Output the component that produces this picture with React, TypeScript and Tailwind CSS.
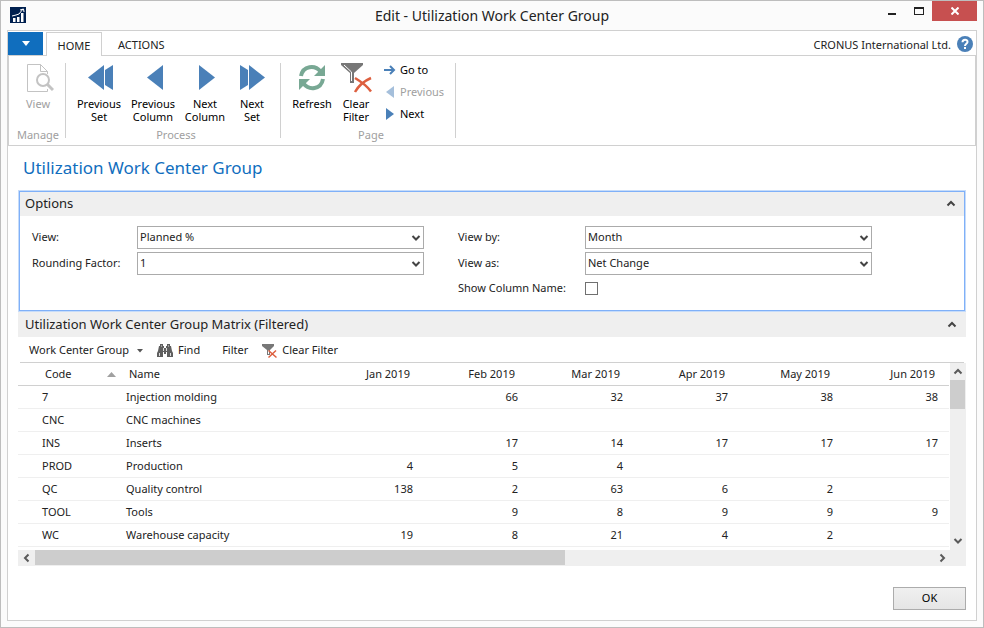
import React from "react";

const BLUE = "#4a80b8";

function Chevron({ dir, color = "#444444" }: { dir: "up" | "down" | "left" | "right"; color?: string }) {
  const paths = {
    up: "M1.5 6.5 L5 3 L8.5 6.5",
    down: "M1.5 3 L5 6.5 L8.5 3",
    left: "M6.5 1.5 L3 5 L6.5 8.5",
    right: "M3.5 1.5 L7 5 L3.5 8.5",
  };
  return (
    <svg width="10" height="10" viewBox="0 0 10 10" fill="none" aria-hidden="true">
      <path d={paths[dir]} stroke={color} strokeWidth="2" />
    </svg>
  );
}

function Arrows({ points, color = BLUE }: { points: string[]; color?: string }) {
  return (
    <svg width="32" height="32" viewBox="0 1 32 32" fill={color} aria-hidden="true">
      {points.map((p) => (
        <polygon key={p} points={p} />
      ))}
    </svg>
  );
}

function ViewIcon() {
  return (
    <svg width="32" height="32" viewBox="0 1 32 32" fill="none" stroke="#c3c3c3" aria-hidden="true">
      <path d="M18.5 2.5H5.5V29.5H25.5V27" />
      <path d="M18.5 2.5V9.5H25.5V12M18.5 2.5L25.5 9.5" />
      <circle cx="21" cy="18" r="6" strokeWidth="2" fill="#ffffff" />
      <path d="M25.5 22.5L31 28" strokeWidth="3" />
    </svg>
  );
}

function RefreshIcon() {
  return (
    <svg width="32" height="32" viewBox="0 1 32 32" aria-hidden="true">
      <g fill="none" stroke="#78a894" strokeWidth="4">
        <path d="M5 14C7 3.5 19 2.5 24.5 9.5" />
        <path d="M27 17C25 28 13 28.5 7.5 21.5" />
      </g>
      <polygon points="29,3 29,14 18,14" fill="#78a894" />
      <polygon points="3,28 3,17 14,17" fill="#78a894" />
    </svg>
  );
}

function ClearFilterIcon() {
  return (
    <svg width="32" height="32" viewBox="0 1 32 32" fill="none" aria-hidden="true">
      <path d="M1 1H23V3L14 11V21H10V11L1 3Z" fill="#777777" />
      <path d="M4 3L11.5 10V19" stroke="#ffffff" />
      <path d="M15 16C20 19 27 24 31 29.5M31 16C24 19 19 23 15 30" stroke="#dd5f3f" strokeWidth="2.5" />
    </svg>
  );
}

function SmallClearFilterIcon() {
  return (
    <svg width="16" height="16" viewBox="0 0 16 16" fill="none" aria-hidden="true">
      <path d="M0 1H12V3L8 7V12H5V7L0 3Z" fill="#777777" />
      <path d="M6.5 7.5V11" stroke="#ffffff" />
      <path d="M6.5 7.5L14.5 14.5M14 7.5L6.5 14.5" stroke="#dd5f3f" strokeWidth="1.5" />
    </svg>
  );
}

function BinocularsIcon() {
  return (
    <svg width="16" height="14" viewBox="0 0 16 14" fill="#5f5f5f" aria-hidden="true">
      <path d="M3 0H6V2H7V4H9V2H10V0H13V2H14L15 7L16 9V13H10V8H9V10H7V8H6V13H0V9L1 7L2 2H3Z" />
      <path d="M4 2H5M11 2H12M2.5 9V12M13.5 9V12M6.5 4V7M9.5 4V7" stroke="#dddddd" strokeWidth="1" />
    </svg>
  );
}

function BigButton({ icon, lines, width, disabled }: { icon: React.ReactNode; lines: string[]; width: string; disabled?: boolean }) {
  return (
    <button type="button" disabled={disabled} className={`flex flex-col items-center disabled:text-[#a0a0a0] ${width}`}>
      {icon}
      <span className="mt-[2px] leading-[13px]">
        {lines.map((l) => (
          <span key={l} className="block whitespace-nowrap">{l}</span>
        ))}
      </span>
    </button>
  );
}

function Group({ label, children, className = "" }: { label: string; children: React.ReactNode; className?: string }) {
  return (
    <section aria-label={label} className={`flex flex-col justify-between border-r border-[#d0d0d0] ${className}`}>
      <div className="flex">{children}</div>
      <div className="-mb-1 text-center leading-[14px] text-[#a0a0a0]">{label}</div>
    </section>
  );
}

function Field({ id, label, value }: { id: string; label: string; value: string }) {
  return (
    <>
      <label htmlFor={id}>{label}</label>
      <div className="grid items-center">
        <select id={id} defaultValue={value} className="col-start-1 row-start-1 h-[23px] w-full appearance-none border border-[#ababab] bg-white pl-[2px] pr-5">
          <option>{value}</option>
        </select>
        <span className="pointer-events-none col-start-1 row-start-1 mr-[3px] justify-self-end">
          <Chevron dir="down" />
        </span>
      </div>
    </>
  );
}

function SectionHeader({ title, className }: { title: string; className: string }) {
  return (
    <button type="button" aria-expanded="true" className={`flex w-full shrink-0 items-center justify-between bg-[#efefef] text-left text-[13px] ${className}`}>
      <span>{title}</span>
      <Chevron dir="up" />
    </button>
  );
}

const months = ["Jan 2019", "Feb 2019", "Mar 2019", "Apr 2019", "May 2019", "Jun 2019"];
const rows: string[][] = [
  ["7", "Injection molding", "", "66", "32", "37", "38", "38"],
  ["CNC", "CNC machines", "", "", "", "", "", ""],
  ["INS", "Inserts", "", "17", "14", "17", "17", "17"],
  ["PROD", "Production", "4", "5", "4", "", "", ""],
  ["QC", "Quality control", "138", "2", "63", "6", "2", ""],
  ["TOOL", "Tools", "", "9", "8", "9", "9", "9"],
  ["WC", "Warehouse capacity", "19", "8", "21", "4", "2", ""],
];

const th = "border-b border-[#d0d0d0] py-0 font-normal";
const td = "border-b border-[#efefef] py-0";

export default function App() {
  return (
    <div className="flex min-h-screen flex-col border border-[#bdbdbd] bg-[#fbfbfb] px-[6px] pb-[6px] font-['Noto_Sans','Open_Sans',sans-serif] text-[11px] text-[#222222]">
      <header className="grid h-[29px] grid-cols-[1fr_auto_1fr]">
        <svg className="ml-[3px] mt-[6px]" width="16" height="16" viewBox="0 0 16 16" aria-hidden="true">
          <rect width="16" height="16" fill="#00204f" />
          <path d="M3 11H5.5V15H3ZM7 10H9.5V15H7ZM11 6H13.5V15H11Z" fill="#ffffff" />
          <path d="M2 9L6 8L9 7L13 2M10 3L13.5 2L14 5" stroke="#ffffff" fill="none" />
        </svg>
        <h1 className="self-center text-[14px]">Edit - Utilization Work Center Group</h1>
        <div className="flex items-start justify-end">
          <button type="button" aria-label="Minimize" className="flex h-5 w-[27px] items-center justify-center">
            <svg width="8" height="8" viewBox="0 0 8 8"><path d="M0 6H8V8H0Z" fill="#222222" /></svg>
          </button>
          <button type="button" aria-label="Maximize" className="flex h-5 w-[27px] items-center justify-center">
            <svg width="10" height="8" viewBox="0 0 10 8"><path d="M0 0H10V8H0ZM1 2V7H9V2Z" fill="#222222" fillRule="evenodd" /></svg>
          </button>
          <button type="button" aria-label="Close" className="flex h-5 w-[45px] items-center justify-center bg-[#c75050]">
            <svg width="8" height="8" viewBox="0 0 8 8"><path d="M0.5 0.5L7.5 7.5M7.5 0.5L0.5 7.5" stroke="#ffffff" strokeWidth="2" /></svg>
          </button>
        </div>
      </header>

      <main className="flex flex-1 flex-col border border-[#d0d0d0] bg-white">
        <nav className="flex h-6 shrink-0 items-end">
          <button type="button" aria-label="File menu" className="mr-[3px] flex h-[23px] w-[35px] items-center justify-center bg-[#106ebe]">
            <svg width="8" height="5" viewBox="0 0 8 5"><path d="M0 0H8L4 5Z" fill="#ffffff" /></svg>
          </button>
          <button type="button" className="z-10 -mb-px h-6 w-14 border border-b-0 border-[#d0d0d0] bg-white pt-[3px]">HOME</button>
          <button type="button" className="ml-4 h-[23px] pt-[3px]">ACTIONS</button>
          <span className="ml-auto mr-[6px] leading-[20px]">CRONUS International Ltd.</span>
          <button type="button" aria-label="Help" className="mb-[3px] mr-[3px]">
            <svg width="16" height="16" viewBox="0 0 16 16">
              <circle cx="8" cy="8" r="8" fill={BLUE} />
              <path d="M5.5 6.3C5.5 2.8 10.7 3 10.5 6C10.4 7.8 8 7.8 8 10" stroke="#ffffff" strokeWidth="2" fill="none" />
              <rect x="7" y="11" width="2" height="2" fill="#ffffff" />
            </svg>
          </button>
        </nav>

        <div className="flex h-[91px] shrink-0 border border-[#d0d0d0] py-[7px] text-black">
          <Group label="Manage" className="w-[57px] pl-[2px]">
            <BigButton width="w-[54px]" disabled icon={<ViewIcon />} lines={["View"]} />
          </Group>
          <Group label="Process" className="w-[215px] pl-[6px]">
            <BigButton width="w-[54px]" icon={<Arrows points={["5,15.5 21,3 21,28", "22,8 30,3 30,28 22,23"]} />} lines={["Previous", "Set"]} />
            <BigButton width="w-[54px]" icon={<Arrows points={["10,15.5 26,3 26,28"]} />} lines={["Previous", "Column"]} />
            <BigButton width="w-[50px]" icon={<Arrows points={["10,3 26,15.5 10,28"]} />} lines={["Next", "Column"]} />
            <BigButton width="w-11" icon={<Arrows points={["4,3 12,8 12,23 4,28", "13,3 29,15.5 13,28"]} />} lines={["Next", "Set"]} />
          </Group>
          <Group label="Page" className="w-[175px] pl-[6px]">
            <BigButton width="w-[50px]" icon={<RefreshIcon />} lines={["Refresh"]} />
            <BigButton width="w-[38px]" icon={<ClearFilterIcon />} lines={["Clear", "Filter"]} />
            <div className="-mt-1 ml-[9px] flex flex-col">
              <button type="button" className="flex h-[22px] items-center gap-1">
                <svg width="12" height="10" viewBox="0 0 12 10" fill="none" stroke={BLUE} strokeWidth="2"><path d="M0 5H10M6 1L10 5L6 9" /></svg>
                Go to
              </button>
              <button type="button" disabled className="flex h-[22px] items-center gap-1 text-[#a0a0a0]">
                <svg width="12" height="12" viewBox="0 0 12 12"><path d="M10 0V12L2 6Z" fill="#a5bfdb" /></svg>
                Previous
              </button>
              <button type="button" className="flex h-[22px] items-center gap-1">
                <svg width="12" height="12" viewBox="0 0 12 12"><path d="M2 0V12L10 6Z" fill={BLUE} /></svg>
                Next
              </button>
            </div>
          </Group>
        </div>

        <div className="flex flex-1 flex-col px-[10px] pb-[10px]">
          <h2 className="py-[10px] pl-[5px] text-[17px] leading-6 text-[#106ebe]">Utilization Work Center Group</h2>

          <section className="border border-[#c6dcfa]">
            <div className="border border-[#7fb0f8]">
              <SectionHeader title="Options" className="h-6 pl-[5px] pr-2" />
              <div className="grid grid-cols-[105px_287px_34px_127px_287px] items-center gap-y-[3px] pb-3 pl-3 pt-[10px]">
                <Field id="view" label="View:" value="Planned %" />
                <span />
                <Field id="view-by" label="View by:" value="Month" />
                <Field id="rounding" label="Rounding Factor:" value="1" />
                <span />
                <Field id="view-as" label="View as:" value="Net Change" />
                <label htmlFor="show-name" className="col-start-4 leading-[20px]">Show Column Name:</label>
                <input id="show-name" type="checkbox" className="size-[13px] appearance-none border border-[#707070] bg-white" />
              </div>
            </div>
          </section>

          <SectionHeader title="Utilization Work Center Group Matrix (Filtered)" className="h-[25px] pl-[7px] pr-[9px]" />
          <div className="mx-[2px] flex h-[26px] shrink-0 items-center border-b border-[#d0d0d0] pl-[9px] pt-[2px]">
            <button type="button" className="flex items-center gap-2">
              Work Center Group
              <svg width="6" height="4" viewBox="0 0 6 4"><path d="M0 0H6L3 3.5Z" fill="#555555" /></svg>
            </button>
            <button type="button" className="ml-[14px] flex items-center gap-[5px]"><BinocularsIcon />Find</button>
            <button type="button" className="ml-[22px]">Filter</button>
            <button type="button" className="ml-[14px] flex items-center gap-1"><SmallClearFilterIcon />Clear Filter</button>
          </div>

          <div className="flex">
            <div className="min-w-0 flex-1 pb-[3px] pr-px">
              <table className="w-full table-fixed border-separate border-spacing-0">
                <colgroup>
                  <col className="w-[105px]" />
                  <col />
                  {months.map((m) => <col key={m} className="w-[105px]" />)}
                </colgroup>
                <thead>
                  <tr className="h-[23px]">
                    <th scope="col" className={`${th} pl-[27px] pr-[7px] text-left`}>
                      <span className="flex items-center justify-between">
                        Code
                        <svg width="9" height="5" viewBox="0 0 9 5"><path d="M0 5H9L4.5 0Z" fill="#a0a0a0" /></svg>
                      </span>
                    </th>
                    <th scope="col" className={`${th} pl-[6px] pr-0 text-left`}>Name</th>
                    {months.map((m) => <th key={m} scope="col" className={`${th} pl-0 pr-[14px] text-right`}>{m}</th>)}
                  </tr>
                </thead>
                <tbody>
                  {rows.map((r) => (
                    <tr key={r[0]} className="h-[23px]">
                      <td className={`${td} pl-6 pr-0`}>{r[0]}</td>
                      <td className={`${td} pl-[3px] pr-0`}>{r[1]}</td>
                      {r.slice(2).map((v, i) => <td key={months[i]} className={`${td} pl-0 pr-[11px] text-right`}>{v}</td>)}
                    </tr>
                  ))}
                </tbody>
              </table>
            </div>
            <div className="flex w-4 flex-col bg-[#efefef]">
              <button type="button" aria-label="Scroll up" className="flex h-[17px] items-center justify-center"><Chevron dir="up" color="#5a5a5a" /></button>
              <div className="mr-px h-[29px] bg-[#cdcdcd]" />
              <button type="button" aria-label="Scroll down" className="mt-auto flex h-[18px] items-center justify-center"><Chevron dir="down" color="#5a5a5a" /></button>
            </div>
          </div>
          <div className="flex h-4 bg-[#efefef]">
            <button type="button" aria-label="Scroll left" className="flex w-[17px] items-center justify-center"><Chevron dir="left" color="#5a5a5a" /></button>
            <div className="flex flex-1"><div className="mb-px w-[59%] bg-[#cdcdcd]" /></div>
            <button type="button" aria-label="Scroll right" className="mr-4 flex w-[17px] items-center justify-center"><Chevron dir="right" color="#5a5a5a" /></button>
          </div>

          <div className="mt-auto flex justify-end pt-4">
            <button type="button" className="h-[23px] w-[73px] border border-[#acacac] bg-linear-to-b from-[#f0f0f0] to-[#e5e5e5] text-black">OK</button>
          </div>
        </div>
      </main>
    </div>
  );
}
